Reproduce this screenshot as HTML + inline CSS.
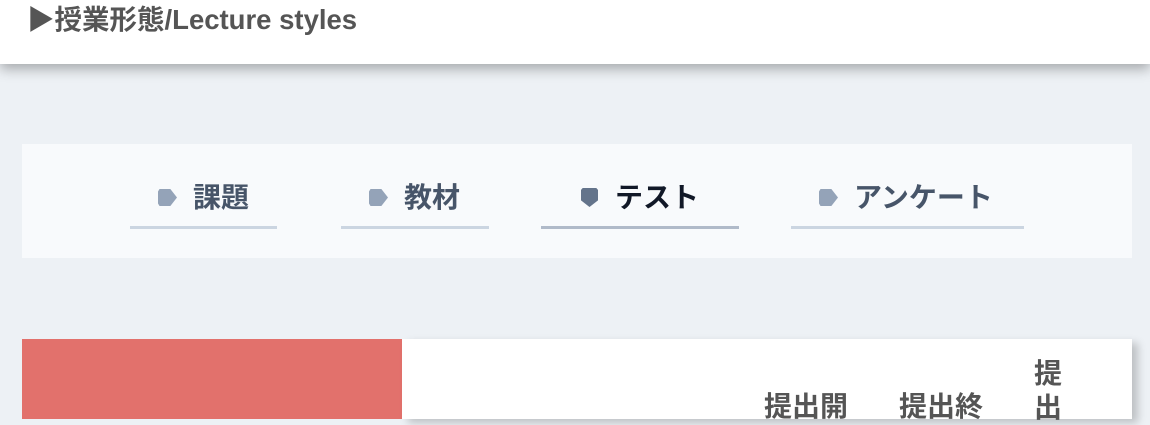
<!DOCTYPE html>
<html><head><meta charset="utf-8"><style>
*{margin:0;padding:0;box-sizing:border-box}
body{width:1150px;height:410px;overflow:hidden;background:#edf1f5;font-family:"Liberation Sans","Noto Sans CJK JP",sans-serif;position:relative}
.hdr{position:absolute;left:0;top:0;width:1150px;height:64px;background:#fff;box-shadow:0 5px 12px rgba(0,0,0,.3)}
.hdr span{position:absolute;left:27px;top:4px;font-size:27.5px;font-weight:bold;color:#555;white-space:nowrap;line-height:32px}
.tabs{position:absolute;left:22px;top:144px;width:1110px;height:114px;background:#f8fafc}
.tab{position:absolute;top:0;height:85px;border-bottom:3px solid #cbd5e1}
.tab .t{position:absolute;top:38px;font-size:28px;font-weight:bold;color:#475569;white-space:nowrap;line-height:32px}
.ic{position:absolute;top:45px;width:19px;height:17px;background:#94a3b8;clip-path:polygon(0 15%,8% 0,65% 0,100% 50%,65% 100%,8% 100%,0 85%)}
.act{border-bottom-color:#b0bac9}
.act .t{color:#111827}
.act .ic{background:#64748b;clip-path:polygon(0 10%,10% 0,90% 0,100% 10%,100% 65%,50% 100%,0 65%)}
.red{position:absolute;left:22px;top:339px;width:380px;height:80px;background:#e2716c}
.card{position:absolute;left:402px;top:339px;width:730px;height:80px;background:#fff;box-shadow:6px 4px 8px rgba(0,0,0,.2)}
.h{position:absolute;font-size:28px;font-weight:bold;color:#555;white-space:nowrap;line-height:34px}
</style></head><body>
<div class="hdr"><span>▶授業形態/Lecture styles</span></div>
<div class="tabs">
<div class="tab" style="left:108px;width:147px"><div class="ic" style="left:28px"></div><div class="t" style="left:63px">課題</div></div>
<div class="tab" style="left:319px;width:148px"><div class="ic" style="left:28px"></div><div class="t" style="left:63px">教材</div></div>
<div class="tab act" style="left:519px;width:198px"><div class="ic" style="left:40px;width:17px;height:19px;top:44px"></div><div class="t" style="left:74px">テスト</div></div>
<div class="tab" style="left:769px;width:233px"><div class="ic" style="left:28px"></div><div class="t" style="left:63px">アンケート</div></div>
</div>
<div class="red"></div>
<div class="card">
<div class="h" style="left:362px;top:51px">提出開</div>
<div class="h" style="left:497px;top:51px">提出終</div>
<div class="h" style="left:632px;top:18px">提<br>出</div>
</div>
</body></html>
